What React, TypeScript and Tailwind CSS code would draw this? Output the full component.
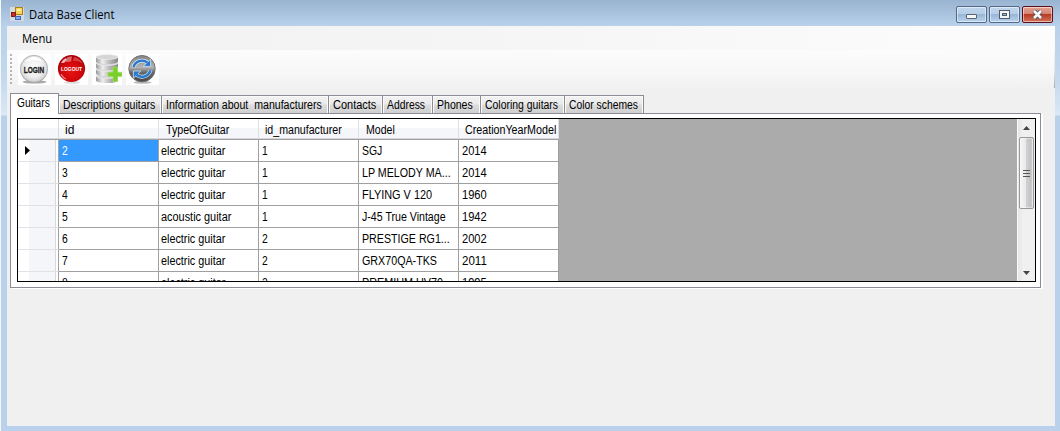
import React from "react";

type Txt = { t: string; w: string };

const tabs: (Txt & { box: string })[] = [
  { t: "Descriptions guitars", w: "92", box: "w-[103px]" },
  { t: "Information about\u00a0 manufacturers", w: "156", box: "w-[167px]" },
  { t: "Contacts", w: "43", box: "w-[54px]" },
  { t: "Address", w: "38", box: "w-[50px]" },
  { t: "Phones", w: "36", box: "w-[48px]" },
  { t: "Coloring guitars", w: "73", box: "w-[84px]" },
  { t: "Color schemes", w: "69", box: "w-[79px]" },
];

const headers: (Txt & { pad: string })[] = [
  { t: "id", w: "9", pad: "pl-[6px]" },
  { t: "TypeOfGuitar", w: "63", pad: "pl-[7px]" },
  { t: "id_manufacturer", w: "77", pad: "pl-[6px]" },
  { t: "Model", w: "29", pad: "pl-[7px]" },
  { t: "CreationYearModel", w: "91", pad: "pl-[6px]" },
];

const rows = [
  ["2", "electric guitar", "1", "SGJ", "2014"],
  ["3", "electric guitar", "1", "LP MELODY MA...", "2014"],
  ["4", "electric guitar", "1", "FLYING V 120", "1960"],
  ["5", "acoustic guitar", "1", "J-45 True Vintage", "1942"],
  ["6", "electric guitar", "2", "PRESTIGE RG1...", "2002"],
  ["7", "electric guitar", "2", "GRX70QA-TKS", "2011"],
  ["8", "electric guitar", "2", "PREMIUM UV70...", "1995"],
];

const widths: Record<string, number> = {
  "electric guitar": 64,
  "acoustic guitar": 70,
  SGJ: 20,
  "LP MELODY MA...": 89,
  "FLYING V 120": 70,
  "J-45 True Vintage": 84,
  "PRESTIGE RG1...": 88,
  "GRX70QA-TKS": 75,
  "PREMIUM UV70...": 90,
  "2014": 25, "1960": 25, "1942": 25, "2002": 25, "2011": 25, "1995": 25,
};

// Condenses a label horizontally to the given advance width.
function Label({ t, w }: { t: string; w: number }) {
  const ref = React.useRef<HTMLSpanElement>(null);
  const [k, setK] = React.useState(0.87);
  React.useLayoutEffect(() => {
    if (ref.current && ref.current.offsetWidth) setK(w / ref.current.offsetWidth);
  }, [w]);
  return (
    <span ref={ref} className="inline-block origin-left whitespace-pre" style={{ transform: `scaleX(${k})` }}>
      {t}
    </span>
  );
}

function LoginIcon() {
  return (
    <svg width="33" height="31" viewBox="0 0 33 31" className="bg-white">
      <defs>
        <radialGradient id="lg" cx=".5" cy=".45" r=".55">
          <stop offset="0" stopColor="#fff" /><stop offset=".65" stopColor="#ededed" /><stop offset=".9" stopColor="#d4d4d4" /><stop offset="1" stopColor="#999" />
        </radialGradient>
      </defs>
      <ellipse cx="16.5" cy="28" rx="12" ry="1.6" fill="#aaa" />
      <circle cx="16" cy="15" r="13.7" fill="url(#lg)" stroke="#aaa" strokeWidth=".8" />
      <path d="M7 8Q16-2 25 8Q16 4 7 8" fill="#fff" />
      <text x="5.7" y="19" textLength="20.5" lengthAdjust="spacingAndGlyphs" fontSize="9" fontWeight="700" fontFamily="Liberation Sans, sans-serif" fill="#1a1a1a" stroke="#1a1a1a" strokeWidth=".3">LOGIN</text>
    </svg>
  );
}

function LogoutIcon() {
  return (
    <svg width="33" height="31" viewBox="0 0 33 31" className="bg-white">
      <defs>
        <radialGradient id="ro" cx=".5" cy=".6" r=".55">
          <stop offset="0" stopColor="#ec1212" /><stop offset=".65" stopColor="#d0080c" /><stop offset="1" stopColor="#a70307" />
        </radialGradient>
      </defs>
      <ellipse cx="17" cy="28.5" rx="8" ry="1.3" fill="#ddd" />
      <circle cx="16.5" cy="14.5" r="13.6" fill="url(#ro)" />
      <path d="M6 9Q8 5 11 4L12 6L9 9Z" fill="#fbd0d0" opacity=".85" />
      <path d="M12 3.5Q15 2 17 2.5L16 7.5L11 8Z" fill="#f0a0a0" opacity=".65" />
      <path d="M19 3Q25 4 28 10Q23 6 18 7Z" fill="#e66" opacity=".6" />
      <path d="M6 20q2 4 5 5" stroke="#f88" strokeWidth="1.2" fill="none" />
      <text x="6" y="17" textLength="21" lengthAdjust="spacingAndGlyphs" fontSize="6" fontWeight="700" fontFamily="Liberation Sans, sans-serif" fill="#fff">LOGOUT</text>
    </svg>
  );
}

function DatabaseIcon() {
  return (
    <svg width="30" height="31" viewBox="0 0 30 31" className="bg-white">
      <defs>
        <linearGradient id="db"><stop stopColor="#999" /><stop offset=".3" stopColor="#eee" /><stop offset=".6" stopColor="#bbb" /><stop offset="1" stopColor="#888" /></linearGradient>
      </defs>
      {[21, 14, 8, 2].map((y) => (
        <g key={y}>
          <path d={`M4 ${y + 1}v4.2q0 2.8 11 2.8t11-2.8v-4.2z`} fill="url(#db)" />
          <ellipse cx="15" cy={y + 1} rx="11" ry="2.4" fill="#d5d5d5" stroke="#eee" strokeWidth=".7" />
        </g>
      ))}
      <path d="M21 13h4.5v5.2H30v4.4h-4.5v4.9H21v-4.9h-5v-4.4h5z" fill="#79cf2b" stroke="#a4e264" strokeWidth=".7" />
    </svg>
  );
}

function RefreshIcon() {
  const arcs = "M7.6 13A8.6 8.2 0 0 1 21.5 8.6M24.4 16.4A8.6 8.2 0 0 1 10.5 20.8";
  const heads = "M24.6 5.2v7.2h-7.4zM7.4 24.2v-7.2h7.4z";
  return (
    <svg width="33" height="31" viewBox="0 0 33 31" className="bg-white">
      <defs>
        <linearGradient id="rf" x2="0" y2="1"><stop stopColor="#858585" /><stop offset=".45" stopColor="#b4b4b4" /><stop offset=".65" stopColor="#666" /><stop offset="1" stopColor="#484848" /></linearGradient>
      </defs>
      <ellipse cx="16.5" cy="28.5" rx="9" ry="1.3" fill="#bbb" />
      <circle cx="16" cy="14.7" r="13.2" fill="url(#rf)" stroke="#707070" strokeWidth="1" />
      <path d={arcs} fill="none" stroke="#d5e6f8" strokeWidth="3.8" />
      <path d={heads} fill="#2878cc" stroke="#d5e6f8" strokeWidth=".8" />
      <path d={arcs} fill="none" stroke="#2878cc" strokeWidth="2.4" />
    </svg>
  );
}

function AppIcon() {
  return (
    <svg width="14" height="14" viewBox="0 0 14 14" shapeRendering="crispEdges">
      <rect width="14" height="14" fill="#d6d9df" />
      <rect x="5.5" y=".5" width="7" height="7" fill="#fbd457" stroke="#ac8010" />
      <rect x="7" y="2" width="4" height="2" fill="#fff0a4" />
      <rect x="1" y="5" width="4" height="4" fill="#c73025" stroke="#821b16" />
      <rect x="5.5" y="9.5" width="5" height="3" fill="#83adf4" stroke="#3c68bc" />
    </svg>
  );
}

const capBtn = "flex h-[17px] w-[31px] items-center justify-center rounded-[2px] border shadow-[inset_0_0_0_1px_rgba(255,255,255,0.5)]";
const blueBtn = "border-[#52698a] bg-[linear-gradient(#c2d6eb_0%,#b5cde6_48%,#98b6d6_50%,#b8d3ec_100%)]";

export default function App() {
  return (
    <div className="flex h-[431px] w-[1060px] flex-col overflow-hidden border-l border-[#f4f7fa] bg-[linear-gradient(#99b4d1_0,#b9d1ea_26px,#c4d9ee_80px,#dbe8f5_115px,#b9d1ea_116px)] pr-[5px] pb-[5px] pl-[6px] font-['Liberation_Sans',Arial,sans-serif] text-[12px] leading-[14px] text-black">
      <div className="flex h-[26px] shrink-0 items-start">
        <div className="mt-[7px] ml-[3px]"><AppIcon /></div>
        <div className="mt-[7px] ml-[5px] font-['Open_Sans','Noto_Sans',sans-serif] text-[12px] leading-[15px]"><Label t="Data Base Client" w={85} /></div>
        <div className="mt-[6px] mr-[2px] ml-auto flex gap-[2px]">
          <div className={`${capBtn} ${blueBtn}`}>
            <div className="mt-[4px] h-[5px] w-[11px] rounded-[1px] border border-[#596378] bg-[#f6f6f6]" />
          </div>
          <div className={`${capBtn} ${blueBtn}`}>
            <svg width="11" height="9" viewBox="0 0 11 9" shapeRendering="crispEdges">
              <path d="M.5.5h10v8H.5z" fill="#f6f6f6" stroke="#535d72" />
              <path d="M3.5 3.5h4v2h-4z" fill="#94b0d0" stroke="#535d72" />
            </svg>
          </div>
          <div className={`${capBtn} border-[#5b1019] bg-[linear-gradient(#e3a293_0%,#d68472_45%,#b93a22_50%,#d0745a_100%)]`}>
            <svg width="13" height="11" viewBox="0 0 13 11">
              <path d="M3 2l7 7M10 2L3 9" stroke="#535666" strokeWidth="4.5" />
              <path d="M3 2l7 7M10 2L3 9" stroke="#fafafa" strokeWidth="2.6" />
            </svg>
          </div>
        </div>
      </div>

      <div className="flex h-[400px] flex-col bg-[#f0f0f0]">
        <div className="h-[24px] shrink-0 bg-[linear-gradient(90deg,#f0f0f0,#fcfcfc)] pt-[5px] pl-[15px] font-['Open_Sans','Noto_Sans',sans-serif] leading-[15px]">
          <Label t="Menu" w={30} />
        </div>
        <div className="flex h-[39px] shrink-0 items-start bg-[linear-gradient(#fcfcfc,#f7f7f7_60%,#f0f0f0)] pt-[4px] pl-[3px]">
          <div className="mt-0 h-[30px] w-[2px] bg-[repeating-linear-gradient(#b5b5b5_0_2px,transparent_2px_4px)]" />
          <div className="ml-[6px]"><LoginIcon /></div>
          <div className="ml-[4px]"><LogoutIcon /></div>
          <div className="ml-[4px]"><DatabaseIcon /></div>
          <div className="ml-[4px]"><RefreshIcon /></div>
          <div className="mt-[-4px] ml-auto h-[38px] w-px bg-[linear-gradient(#f4f4f4,#e4e4e4_60%,#a8a8a8)]" />
        </div>

        <div className="ml-[3px] flex h-[24px] shrink-0 items-end pt-[4px]">
          <div className="z-10 mb-[-1px] h-[21px] w-[49px] border border-b-0 border-[#8b8c95] bg-white pt-[2px] pl-[6px]">
            <Label t="Guitars" w={33} />
          </div>
          {tabs.map((x) => (
            <div key={x.t} className={`h-[18px] overflow-hidden whitespace-nowrap border-t border-r border-[#8b8c95] bg-[linear-gradient(#f3f3f3,#eaeaea_48%,#dddddd_52%,#cfcfcf)] pt-[2px] pl-[4px] shadow-[inset_1px_1px_0_#fafafa,inset_-1px_0_0_#fafafa] ${x.box}`}>
              <Label t={x.t} w={Number(x.w)} />
            </div>
          ))}
        </div>

        <div className="ml-[3px] h-[175px] w-[1031px] shrink-0 border border-[#8b8c95] bg-white pt-[4px] pl-[6px] shadow-[2px_1px_0_#fff]">
          <div className="flex h-[164px] w-[1019px] overflow-hidden border border-black bg-[#ababab]">
            <div className="w-[541px] shrink-0">
              <div className="flex h-[21px] border-b border-[#a0a0a0] bg-[linear-gradient(#fff_0_9px,#f5f6f9_9px_19px,#d5d5d5_19px)]">
                <div className="w-[41px] border-r border-[#d8dadd]" />
                {headers.map((h) => (
                  <div key={h.t} className={`w-[100px] whitespace-nowrap border-r border-[#dedfe1] pt-[4px] ${h.pad}`}>
                    <Label t={h.t} w={Number(h.w)} />
                  </div>
                ))}
              </div>
              {rows.map((r, i) => (
                <div key={r[0]} className="flex h-[22px] leading-[14px]">
                  <div className="flex h-[22px] w-[41px] items-center border-r border-b border-r-[#a0a0a0] border-b-[#e1e2e4] bg-[linear-gradient(90deg,#fff_11px,#f4f6f9_11px_37px,#d8d8d8_37px_38px,#fff_38px)] pl-[7px]">
                    {i === 0 && <svg width="5" height="9" viewBox="0 0 5 9"><path d="M0 0l5 4.5L0 9z" /></svg>}
                  </div>
                  {r.map((c, j) => (
                    <div key={j} className={`h-[22px] w-[100px] border-r border-b border-[#a0a0a0] pt-[4px] whitespace-nowrap ${j === 1 ? "pl-[2px]" : "pl-[3px]"} ${i === 0 && j === 0 ? "bg-[#3399ff] text-white" : "bg-white"}`}>
                      <Label t={c} w={widths[c] ?? 6} />
                    </div>
                  ))}
                </div>
              ))}
            </div>
            <div className="ml-auto flex w-[18px] flex-col items-center border-l border-[#fafafa] bg-[linear-gradient(90deg,#e5e5e5,#f0f0f0_30%)] pr-[1px]">
              <svg width="7" height="4" viewBox="0 0 7 4" className="mt-[7px] shrink-0"><path d="M0 4L3.5 0 7 4z" fill="#444" /></svg>
              <div className="mt-[7px] flex h-[72px] w-[15px] shrink-0 flex-col items-center justify-center gap-[2px] rounded-[2px] border border-[#979797] bg-[linear-gradient(90deg,#f5f5f5,#e9e9eb_45%,#d0d0d3_50%,#c2c2c5_85%,#e2e2e2)] shadow-[inset_0_0_0_1px_rgba(255,255,255,0.4)]">
                <div className="h-px w-[7px] bg-[#555]" /><div className="h-px w-[7px] bg-[#555]" /><div className="h-px w-[7px] bg-[#555]" />
              </div>
              <svg width="7" height="4" viewBox="0 0 7 4" className="mt-auto mb-[6px] shrink-0"><path d="M0 0L3.5 4 7 0z" fill="#444" /></svg>
            </div>
          </div>
        </div>
      </div>
    </div>
  );
}
